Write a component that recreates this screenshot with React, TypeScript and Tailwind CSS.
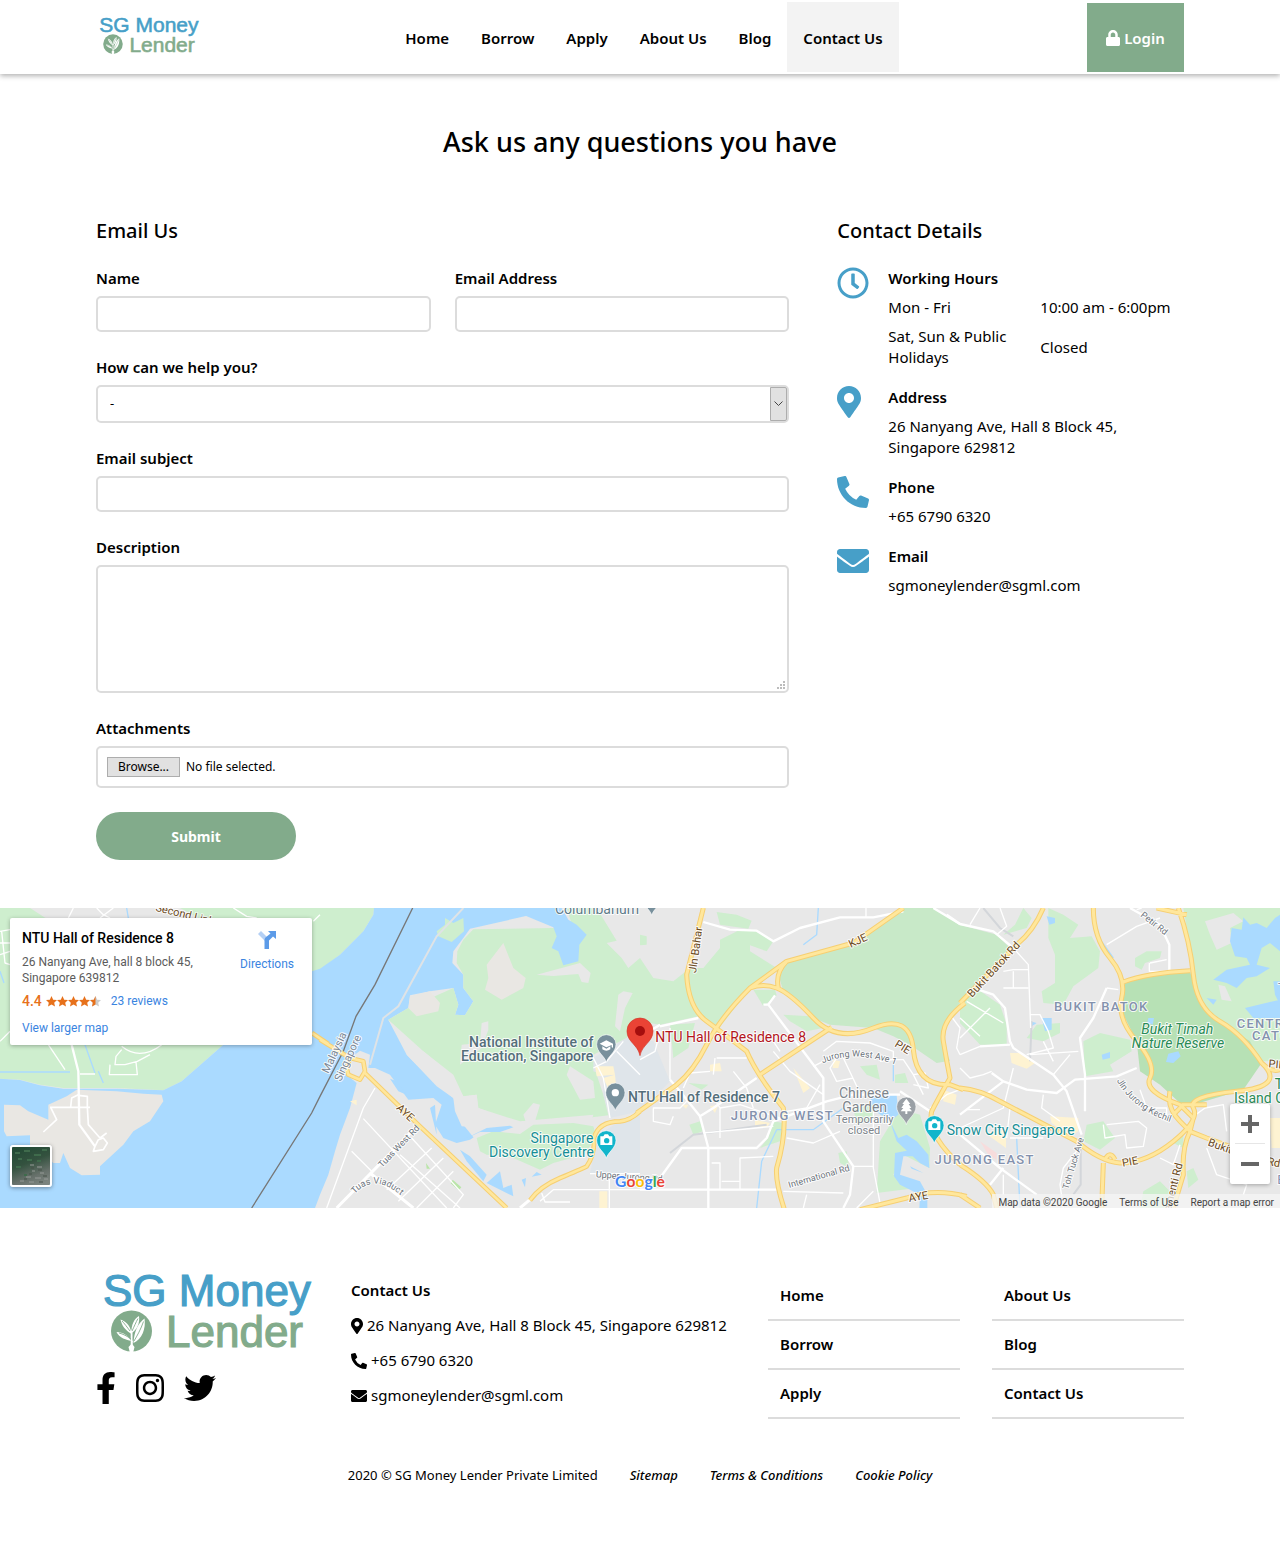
import React from "react";
import {
  FaEnvelope,
  FaFacebookF,
  FaInstagram,
  FaLock,
  FaMapMarkerAlt,
  FaPhoneAlt,
  FaRegClock,
  FaTwitter,
} from "react-icons/fa";

function Logo({ className }: { className: string }) {
  return (
    <svg viewBox="0 0 220 84" className={className} role="img" aria-label="SG Money Lender">
      <g fontFamily="Liberation Sans, Arial, sans-serif" fontSize="44" strokeWidth="1.200">
        <text x="7" y="36" fill="#479fc8" stroke="#479fc8">SG Money</text>
        <text x="70" y="77" fill="#82ab8b" stroke="#82ab8b">Lender</text>
      </g>
      <circle cx="35.500" cy="61" r="20.500" fill="#82ab8b" />
      <g fill="#fff">
        <path d="M35.500 70 37 71Q35.500 74 38.500 77L37 83H34L32.500 77Q36 74 35.500 70z" />
        <path d="M35 71C31 70 23 68 20.500 62 27 62 33 66 35 71z" />
        <path d="M35.500 64C29 60 26 56 24.500 49.500 31 52 35 57 35.500 64z" />
        <path d="M35.500 63C35 55 38 49 43 46 44 53 41 60 35.500 63z" />
        <path d="M37.500 73C38 62 42 53 48.500 48.500 50 59 46 69 37.500 73z" />
        <path d="M34.700 60h1.800v14h-1.800z" />
      </g>
      <path d="M38 71C41 66 45 59 47.500 51.500M36 61C38 57 40 52 42 48.500M35 69C31 66 27 64 23 63M34 61C31 57 28 53 26 51" stroke="#82ab8b" strokeWidth="0.900" fill="none" />
    </svg>
  );
}

const navItems = ["Home", "Borrow", "Apply", "About Us", "Blog"];

function Header() {
  return (
    <header className="relative bg-white shadow-[0_2px_5px_rgba(0,0,0,0.3)]">
      <div className="mx-auto flex h-[74px] w-[85%] items-center justify-between">
        <a href="#home" className="mb-1">
          <Logo className="block w-[105px]" />
        </a>
        <nav className="flex text-[15px] font-semibold">
          {navItems.map((n) => (
            <a key={n} href="#nav" className="flex h-[70px] items-center px-4 pt-0.5">{n}</a>
          ))}
          <a href="#contact" aria-current="page" className="flex h-[70px] items-center bg-[#f3f3f3] px-4 pt-0.5">Contact Us</a>
        </nav>
        <a href="#login" className="flex h-[69px] w-[97px] items-center justify-center gap-1 bg-[#82ab8b] pt-0.5 text-[15px] font-semibold text-white">
          <FaLock className="h-4 w-[14px]" />
          Login
        </a>
      </div>
    </header>
  );
}

const field = "block w-full rounded-[5px] border-2 border-[#dcdcdc] bg-white px-3 outline-none";
const label = "mb-1.5 block text-[15px] leading-[23px] font-semibold";
const heading = "mb-[22px] text-[20px] leading-[29px] font-medium";

function EmailForm() {
  return (
    <form className="flex flex-col gap-6" onSubmit={(e) => e.preventDefault()}>
      <div className="grid grid-cols-2 gap-6">
        <div>
          <label htmlFor="name" className={label}>Name</label>
          <input id="name" className={`${field} h-9`} />
        </div>
        <div>
          <label htmlFor="email" className={label}>Email Address</label>
          <input id="email" type="email" className={`${field} h-9`} />
        </div>
      </div>
      <div>
        <label htmlFor="topic" className={label}>How can we help you?</label>
        <div className="relative">
          <select id="topic" className={`${field} h-[38px] appearance-none text-[13px]`}>
            <option>-</option>
          </select>
          <span className="pointer-events-none absolute inset-y-0.5 right-0.5 flex w-[17px] items-center justify-center rounded-r-[2px] border border-[#adadad] bg-[#e1e1e1]">
            <svg viewBox="0 0 9 6" className="w-[9px]" fill="none" stroke="#444"><path d="M0.500 0.500 4.500 4.500 8.500 0.500" /></svg>
          </span>
        </div>
      </div>
      <div>
        <label htmlFor="subject" className={label}>Email subject</label>
        <input id="subject" className={`${field} h-9`} />
      </div>
      <div>
        <label htmlFor="description" className={label}>Description</label>
        <div className="relative">
          <textarea id="description" className={`${field} h-32 resize-none py-2`} />
          <svg viewBox="0 0 8 8" className="pointer-events-none absolute right-1 bottom-1 w-2" fill="#bcbcbc">
            <path d="M6 0h2v2h-2zM3 3h2v2h-2zM6 3h2v2h-2zM0 6h2v2h-2zM3 6h2v2h-2zM6 6h2v2h-2z" />
          </svg>
        </div>
      </div>
      <div>
        <label htmlFor="files" className={label}>Attachments</label>
        <div className="relative flex h-[42px] items-center gap-1.5 rounded-[5px] border-2 border-[#dcdcdc] px-[9px] text-[12px]">
          <span className="flex h-5 w-[73px] items-center justify-center border border-[#adadad] bg-[#e1e1e1]">Browse...</span>
          <span>No file selected.</span>
          <input id="files" type="file" className="absolute inset-0 opacity-0" />
        </div>
      </div>
      <button type="submit" className="h-12 w-[200px] rounded-full bg-[#82ab8b] text-[14px] font-bold text-white">Submit</button>
    </form>
  );
}

function Detail({ icon, title, children }: { icon: React.ReactNode; title: string; children: React.ReactNode }) {
  return (
    <div className="flex">
      <div className="w-[51px] shrink-0 text-[#479fc8]">{icon}</div>
      <div className="min-w-0 flex-1 pt-px">
        <h3 className="mb-2 font-semibold">{title}</h3>
        {children}
      </div>
    </div>
  );
}

function ContactDetails() {
  return (
    <div className="flex flex-col gap-[18px] text-[15px] leading-[21px]">
      <Detail icon={<FaRegClock className="size-8" />} title="Working Hours">
        <table className="w-full text-left">
          <tbody>
            <tr>
              <td className="w-[152px] pb-2">Mon - Fri</td>
              <td className="pb-2 whitespace-nowrap">10:00 am - 6:00pm</td>
            </tr>
            <tr>
              <td className="pr-5">Sat, Sun &amp; Public Holidays</td>
              <td>Closed</td>
            </tr>
          </tbody>
        </table>
      </Detail>
      <Detail icon={<FaMapMarkerAlt className="h-8 w-6" />} title="Address">
        <p>26 Nanyang Ave, Hall 8 Block 45,<br />Singapore 629812</p>
      </Detail>
      <Detail icon={<FaPhoneAlt className="size-8" />} title="Phone"><p>+65 6790 6320</p></Detail>
      <Detail icon={<FaEnvelope className="size-8" />} title="Email"><p>sgmoneylender@sgml.com</p></Detail>
    </div>
  );
}

/* Map geometry: four 960-unit tiles side by side, three units to a pixel. */
const tiles = ["translate(0 0)", "translate(960 0)", "translate(1920 0)", "translate(2880 0)"];

type Shape = { t: number; c: string; d: string };
const G = "#ceeece";
const W = "#aadaff";
const L = "#e8e8e8";
const B = "#e9e7e3";
const Y = "#fef3d2";

const areas: Shape[] = [
  { t: 0, c: G, d: "M0 0H1122L1120 20 1090 70 1020 140 936 205 670 410 545 520 490 547 350 540 190 540 120 530 60 515 0 512z" },
  { t: 0, c: L, d: "M90 0 140 32 600 32 540 0z" },
  { t: 1, c: W, d: "M162 0 160 20 130 70 60 140 0 182 -24 190 -290 410 -415 520 -470 547 -610 542 -770 542 -840 532 -900 516 -960 512V900H-15L0 860 25 800 45 730 60 680 90 600 110 525 80 500 92 450 120 428 150 440 145 480 165 480 210 500 265 575 340 570 365 590 345 650 370 690 410 705 450 695 480 675 570 655 480 660 425 655 405 610 400 570 350 535 260 440 265 425 205 335 265 300 270 262 330 250 400 240 415 290 405 320 435 322 460 280 430 240 430 200 397 165 400 130 430 90 450 62 725 0z" },
  { t: 0, c: B, d: "M12 590 60 592 85 610 145 635 145 590 200 565 230 545 350 550 430 557 485 560 490 580 450 640 400 670 370 710 300 775 300 800 245 802 210 780 190 735 180 765 160 765 90 710 90 682 20 685 12 670z" },
  { t: 1, c: G, d: "M740 0H830L890 98 860 105 905 150 925 180 960 150 1000 210 1060 220 1110 180 1150 180 1200 120 1200 95 1260 65 1300 65 1360 100 1340 130 1290 112 1290 130 1370 180 1290 240 1190 370 1135 325 1020 350 960 340 920 390 820 440 830 500 850 560 865 622 800 630 760 640 640 650 600 650 475 600 470 560 430 565 380 490 310 430 265 425 205 335 265 300 400 240 415 290 405 320 435 322 460 280 430 240 430 200 410 165 412 130 430 95 460 64 700 60 775 110z" },
  { t: 1, c: W, d: "M560 0H725L745 35 770 50 800 80 778 110 775 160 730 172 715 130 695 120 710 85 700 58z" },
  { t: 1, c: G, d: "M350 70 375 50 375 30 400 45 430 30 432 70 395 102 355 85z" },
  { t: 1, c: B, d: "M550 105 580 180 617 210 610 240 545 275 495 245 505 210 500 170zM270 265 330 250 360 285 355 310 290 325 265 300z" },
  { t: 1, c: L, d: "M650 200 780 165 812 195 805 225 785 222 775 198 700 204zM485 345 505 340 505 365 485 420 420 470 425 410 480 405zM610 620 640 585 660 590 645 640 620 650zM740 500 750 475 820 520 825 570 780 575zM895 260 910 250 938 255 915 300 900 370 885 355zM205 335 310 430 400 500 430 565 470 560 475 600 600 640 820 620 800 690 470 700 430 650 400 570 350 530 260 440z" },
  { t: 1, c: G, d: "M470 690 520 670 600 678 640 650 760 645 820 655 830 690 790 740 700 765 660 785 580 750 500 740 480 730z" },
  { t: 1, c: W, d: "M210 512 230 520 260 560 235 550zM225 500 240 510 232 520zM420 725 450 745 500 800 490 820 440 760zM540 790 550 840 575 830 580 865 500 825zM605 815 618 810 615 838zM650 792 665 800 635 806zM330 600 345 590 350 680zM410 705 500 660 570 653 580 658 540 672 480 672z" },
  { t: 1, c: "#dfe5ea", d: "M820 450 920 390 1000 400 1050 520 960 610 870 630 850 560 850 500 820 490zM835 680 900 640 960 610V795H810z" },
  { t: 1, c: Y, d: "M825 475 880 475 885 500 830 505zM850 510 885 500 890 550 870 555zM838 850H862V900H838zM90 580 110 575 110 592z" },
  { t: 1, c: "#b9e5a8", d: "M398 815 424 838 416 847 392 826zM318 765 330 782 320 782z" },
  { t: 2, c: L, d: "M0 0H60L30 60H0z" },
  { t: 2, c: G, d: "M0 80 20 85 20 110 0 112zM230 12 290 20 335 38 325 62 240 50zM90 350 165 345 145 420 100 450zM340 245 405 245 410 262 370 295zM430 320 510 325 560 358 500 370 450 340zM145 525 205 530 185 545zM148 650 180 640 188 670 160 680zM400 640 430 645 420 700 360 720 385 690zM660 475 710 470 720 515 680 500zM765 500 795 495 805 525 765 525zM720 700 750 650 770 600 840 620 870 720 868 780 790 740 760 800 830 840 710 855zM595 735 620 730 628 780 600 765zM640 600 700 590 700 635 650 650z" },
  { t: 2, c: W, d: "M690 565 770 560 775 620 750 640 700 605zM750 640 775 690 800 680 830 700 865 740 868 780 840 765 770 700zM765 735 815 725 830 745 790 745 780 800 840 820 862 860V900H838L840 860 780 830 762 805zM810 775 850 795 815 782z" },
  { t: 2, c: "#c8e9c8", d: "M440 165 640 110 780 0H880L960 50 1070 80 1120 130 960 285 910 350 905 400 930 458 890 465 810 410 760 385 700 360 570 350 520 330 430 250 415 200z" },
  { t: 2, c: Y, d: "M210 470 240 465 245 490 210 490zM460 480 510 540 490 555zM580 455 600 460 595 480 578 480zM210 595 235 590 225 615zM345 635 390 645 380 658 345 655zM910 545 950 560 945 590 910 580zM125 590 145 590 138 602z" },
  { t: 3, c: G, d: "M190 0 165 50 130 80 200 60 215 30zM265 0 310 20 355 50 330 90 395 85 420 130 415 180 340 235 310 290 250 285 245 250 285 225 285 140 265 90zM230 350 300 345 300 375 250 400 200 390zM0 280 55 245 120 290 140 350 140 410 60 410 0 345zM370 400 420 375 510 395 515 430 450 470 460 490 375 505zM380 650 430 640 465 690 420 725 370 700zM550 850 600 820 640 860 620 900H540zM680 790 700 780 715 815 685 840zM630 700 670 680 670 720zM525 150 560 130 605 130 600 150 555 165 545 185 525 175z" },
  { t: 3, c: "#cfeecd", d: "M670 0H960V460H905L860 400 760 330 715 260z" },
  { t: 3, c: L, d: "M735 40 820 15 850 40 810 60 815 105 770 125 750 80zM775 230 795 235 815 280 785 275z" },
  { t: 3, c: W, d: "M850 28 870 50 890 45 920 60 945 30 960 20V130L930 105 905 120 890 170 930 180 890 205 860 210 830 240 800 225 760 215 800 185 870 170 860 150 825 145 810 100 815 60 845 65zM940 220H960V290L945 260zM855 300 960 275V330H880zM740 270 770 275 760 290zM260 25 285 30 285 45 268 50zM245 330 275 330 275 365 255 370zM425 440 450 432 450 450 428 455zM210 340 230 345 215 355z" },
  { t: 3, c: "#b7e1b5", d: "M495 220 570 200 690 190 712 262 760 330 870 400 905 465 850 545 700 590 660 585 600 530 540 490 530 400 480 300z" },
  { t: 3, c: W, d: "M625 437 655 430 662 445 640 465 618 462zM565 330 582 330 578 350 562 345z" },
  { t: 3, c: Y, d: "M150 435 185 435 225 465 200 482 155 465zM270 625 355 630 355 670 330 685 275 645zM75 675 138 665 138 720zM930 630H960V720H935z" },
  { t: 3, c: "#f7dcdc", d: "M60 700 110 735 110 755 85 740z" },
];

const minor: Shape[] = [
  { t: 0, c: "7", d: "M215 410 235 490 238 650 285 715" },
  { t: 0, c: "5", d: "M235 560 215 570 212 597 M150 598H270 M152 598 170 635 130 672 M262 597V565L235 562 M262 597 265 650 300 690 M285 715 280 730 310 725 322 705 310 690 295 695 285 715 M300 690 320 675" },
  { t: 0, c: "4", d: "M0 70 30 65 M0 105H30 M0 140 30 130 M5 70 15 165 30 170 M0 400 30 370 M205 30 220 0 M940 40 960 20 M145 410 195 485 M365 415Q420 460 485 410 M365 425 348 445 345 470 375 470 412 460 450 440 M330 470 328 500H412L408 462 M240 498H285 M290 0 310 20 330 30 M300 30 340 0 M700 0 740 25 770 30" },
  { t: 1, c: "9", d: "M50 900 290 655 M150 795 280 900 M600 900 630 875" },
  { t: 1, c: "4", d: "M20 900 130 600 165 540 M130 632 380 900 M95 730 155 790 M275 690 430 860 400 900 M240 740 420 900 M335 720 200 845 M370 750 235 880 M400 790 290 900 M300 650 340 700 M660 880 700 845 960 845 M665 855 675 882H750 M810 797H960 M868 797V900 M815 440 850 510 870 630 M820 480 860 460 910 400 M890 430 960 500" },
  { t: 2, c: "7", d: "M190 42 270 65 350 68 400 100 480 60 600 28 700 28 790 10 M880 0 960 48 M370 290 385 290 550 510 550 640 640 775 630 860 610 900 M405 262 385 290 M60 810 125 720H205V900 M0 845H410 M180 625 205 720 M205 720H350L380 690 400 640 560 580 640 560H780 M180 625 220 600 350 510 M180 625 120 550 90 515 M780 550 870 610 M60 355 175 330 M20 375 60 350" },
  { t: 2, c: "4", d: "M678 0V28 M90 360V515 M0 455 45 430 60 370 M215 560 240 600 300 590 420 630 M150 570 120 600 40 600 40 640 90 650 100 625 M210 490 150 495 130 540 M230 450H320 M225 450 220 500 M280 490 320 540 340 600 M240 600V690 M190 675 400 655 M215 765H240V845 M300 845V750L400 745 M245 820H300 M440 690 520 705 600 670 M430 850 610 855 M400 430 450 490 550 560 M380 370 420 430 M440 610 500 600 540 530 M550 430 590 400 690 405 760 430V455L720 460 M590 450 570 480 590 520 640 510 M610 450 660 555 M520 475 590 440 M740 455 790 455 820 500 850 560 M820 500 855 495 865 540 820 530 M700 600V780L720 885 M640 775H700 M500 860 490 900 M650 900 700 850 M930 320 960 360 950 420 960 440 M870 600 920 560 960 545" },
  { t: 3, c: "7", d: "M-40 20 0 48 100 70 160 120 M55 245 100 260 135 300 150 400 160 420 280 500 320 550 365 680 M0 620 130 520 M510 0 600 50 628 110V190 M530 480 470 505 345 515 290 555 200 545 130 520 95 495 M150 410 60 415 M440 240 400 330 360 390 375 500V610 M0 680 120 780 230 860 M130 780 90 830" },
  { t: 3, c: "4", d: "M110 80 140 55 120 0 M30 50 60 0 M160 120 205 170 212 360 M130 190 160 185H205 M160 190V240H205 M130 240H160 M20 280 130 345 M0 390 90 300 M0 330 60 385 M0 440 60 415 M0 480 30 510 70 500 95 490 M212 320 240 320 265 370 280 420 200 440 M210 440 355 430 M440 110 530 55 600 30 M440 240 475 245 M570 165 620 155 M568 165V190H625 M0 660 130 600 160 480 M60 605H20 M150 600 140 690 M150 690 250 690 M365 710 310 780 300 830 310 900 M440 650 535 640 560 660 550 715 500 720 495 680 435 690 430 650 M600 750 640 770 660 710 M540 545 560 600 620 600V625 M700 625 735 600 790 590 800 670 M740 720 770 800 860 830 850 860 M530 5 545 0 M130 800V860 M250 400 280 460 M280 500 330 440 M250 560 245 600 300 640" },
];

const major: Shape[] = [
  { t: 0, c: "12", d: "M936 375 985 408" },
  { t: 1, c: "12", d: "M0 395 90 450 130 460 135 490 120 515 85 500 80 480 M90 450 80 480 85 500 M130 490 300 655 560 900 M630 877Q660 835 720 810 T800 775 Q825 740 822 690 Q835 640 900 640 Q930 638 960 610" },
  { t: 2, c: "13", d: "M-10 615 110 530 Q160 490 200 410 T330 240 L440 160 640 105 790 0 M330 240Q370 225 410 240 T520 330 T700 360 T820 425 T930 530 L970 545 M190 0 140 200 Q145 300 200 340 T320 430 Q350 500 430 600 Q440 680 410 780 Q405 820 435 910 M575 358 360 500 M440 160Q405 195 415 240 M660 905 800 870 Q880 840 980 865 M975 285Q900 340 910 400 T930 510 Q890 580 875 610 Q860 680 960 770" },
  { t: 3, c: "13", d: "M0 285 170 110 Q220 70 250 0 M400 0Q400 90 450 150 T485 270 T530 400 T570 510 T660 590 L700 630 690 670 740 690 960 770 M490 222Q560 195 690 188 M590 0 680 20 M655 0 Q690 100 700 200 T780 340 T905 465 Q940 500 970 480 M0 540Q60 545 120 580 L350 700 Q420 760 480 765 Q560 765 640 700 T700 600 T830 550 T905 465 M630 550Q620 600 660 640 T690 670 Q665 720 670 800 L640 900 M430 765 425 900 M0 770Q80 820 100 860 L110 900 M0 860 60 900 M435 755Q450 725 465 755 M670 590 640 620 M665 590 740 590" },
];

function Roads({ color, extra }: { color: string; extra: number }) {
  return (
    <g fill="none" stroke={color} strokeLinejoin="round">
      {major.map((r, i) => (
        <path key={i} transform={tiles[r.t]} d={r.d} strokeWidth={Number(r.c) + extra} />
      ))}
    </g>
  );
}

type MapText = { x: number; y: number; s: string; f: string; size?: number; rot?: number; anchor?: "start" | "middle" | "end"; cls?: string };
const road = "#6b4a1c";
const street = "#6d747c";
const district = "font-medium tracking-widest";
const labels: MapText[] = [
  { x: 465, y: 8, s: "Second Link", f: road, size: 33, rot: 14 },
  { x: 1665, y: 18, s: "Columbarium", f: "#5f7c8a" },
  { x: 1780, y: 417, s: "National Institute of", f: "#546e7a", anchor: "end", cls: "font-medium" },
  { x: 1780, y: 459, s: "Education, Singapore", f: "#546e7a", anchor: "end", cls: "font-medium" },
  { x: 1780, y: 705, s: "Singapore", f: "#168e96", anchor: "end" },
  { x: 1782, y: 747, s: "Discovery Centre", f: "#168e96", anchor: "end" },
  { x: 1966, y: 402, s: "NTU Hall of Residence 8", f: "#b3151c" },
  { x: 1884, y: 582, s: "NTU Hall of Residence 7", f: "#546e7a", cls: "font-medium" },
  { x: 2347, y: 637, s: "JURONG WEST", f: "#8391ad", size: 39, anchor: "middle", cls: district },
  { x: 2954, y: 768, s: "JURONG EAST", f: "#8391ad", size: 39, anchor: "middle", cls: district },
  { x: 3304, y: 310, s: "BUKIT BATOK", f: "#8391ad", size: 39, anchor: "middle", cls: district },
  { x: 3710, y: 361, s: "CENTRAL WATER", f: "#8391ad", size: 39, cls: district },
  { x: 3756, y: 397, s: "CATCHMENT", f: "#8391ad", size: 39, cls: district },
  { x: 3834, y: 252, s: "T", f: "#8391ad", size: 39 },
  { x: 3832, y: 828, s: "B", f: "#8391ad", size: 39 },
  { x: 2592, y: 570, s: "Chinese", f: "#7d858c", anchor: "middle" },
  { x: 2594, y: 612, s: "Garden", f: "#7d858c", anchor: "middle" },
  { x: 2594, y: 645, s: "Temporarily", f: "#7d858c", size: 33, anchor: "middle" },
  { x: 2592, y: 677, s: "closed", f: "#7d858c", size: 33, anchor: "middle" },
  { x: 2840, y: 682, s: "Snow City Singapore", f: "#168e96" },
  { x: 3532, y: 378, s: "Bukit Timah", f: "#2a8b57", anchor: "middle", cls: "italic" },
  { x: 3534, y: 420, s: "Nature Reserve", f: "#2a8b57", anchor: "middle", cls: "italic" },
  { x: 3824, y: 543, s: "The", f: "#2a8b57" },
  { x: 3702, y: 585, s: "Island Club", f: "#2a8b57" },
  { x: 985, y: 498, s: "Malaysia", f: "#7c8794", size: 33, rot: -65 },
  { x: 1022, y: 522, s: "Singapore", f: "#7c8794", size: 33, rot: -65 },
  { x: 1187, y: 602, s: "AYE", f: road, size: 33, rot: 43 },
  { x: 1146, y: 780, s: "Tuas West Rd", f: street, size: 27, rot: -46 },
  { x: 2088, y: 196, s: "Jln Bahar", f: road, size: 33, rot: -82 },
  { x: 2552, y: 120, s: "KJE", f: road, size: 33, rot: -25 },
  { x: 2682, y: 414, s: "PIE", f: road, size: 33, rot: 32 },
  { x: 2368, y: 840, s: "International Rd", f: street, size: 27, rot: -16 },
  { x: 2728, y: 882, s: "AYE", f: road, size: 33, rot: -10 },
  { x: 1787, y: 808, s: "Upper Jurong Rd", f: street, size: 27, rot: 4 },
  { x: 2916, y: 270, s: "Bukit Batok Rd", f: road, size: 33, rot: -47 },
  { x: 3420, y: 24, s: "Petir Rd", f: street, size: 27, rot: 38 },
  { x: 3368, y: 776, s: "PIE", f: road, size: 33, rot: -10 },
  { x: 3205, y: 845, s: "Toh Tuck Ave", f: street, size: 27, rot: -73 },
  { x: 3622, y: 712, s: "Bukit", f: road, size: 33, rot: 20 },
  { x: 3800, y: 770, s: "Rd", f: road, size: 33, rot: 12 },
  { x: 3505, y: 940, s: "Clementi Rd", f: road, size: 33, rot: -76 },
  { x: 3805, y: 478, s: "PIE", f: road, size: 33, rot: 5 },
];

const curved = [
  { id: "jurong-west-ave", d: "M2468 466Q2560 425 2680 468", s: "Jurong West Ave 1" },
  { id: "jln-jurong-kechil", d: "M3350 518Q3400 605 3510 642", s: "Jln Jurong Kechil" },
  { id: "tuas-viaduct", d: "M1064 858Q1120 795 1200 860", s: "Tuas Viaduct" },
];

function Pin({ x, y, color, glyph }: { x: number; y: number; color: string; glyph: React.ReactNode }) {
  return (
    <g transform={`translate(${x} ${y})`}>
      <path d="M0 0C-4-18-29-30-29-54A29 29 0 0 1 29-54C29-30 4-18 0 0z" fill={color} stroke="#fff" strokeOpacity="0.600" strokeWidth="3" />
      {glyph}
    </g>
  );
}

const camera = (
  <g>
    <path d="M-18-66h9l4-6h10l4 6h9v26h-36z" fill="#fff" />
    <circle cx="1" cy="-53" r="8" fill="#12b5cb" />
  </g>
);

function MapCanvas() {
  return (
    <svg viewBox="0 0 3840 900" preserveAspectRatio="xMidYMid slice" className="block h-full w-full font-['Roboto',sans-serif]" role="img" aria-label="Map of western Singapore">
      <rect width="3840" height="900" fill={L} />
      {areas.map((a, i) => (
        <path key={i} transform={tiles[a.t]} d={a.d} fill={a.c} />
      ))}
      <g fill="none" stroke={W} strokeWidth="4">
        <path d="M380 0 385 30M0 190 12 225M255 410 285 495M0 492H210M295 490 310 525" />
        <path d="M2455 0 2450 80 2410 110M2680 460V520M2330 665 2440 665 2530 600M2270 900 2285 760 2330 665M3050 690 3060 900M3275 0 3290 80 3340 150" />
      </g>
      <path d="M1390 0 1310 85 1195 295 1150 330 1110 470" fill="none" stroke="#dfe3e6" strokeWidth="6" />
      <path d="M2010 735 2080 680 2160 670 2300 650M2950 0 3000 60 3040 85M3090 460 3095 340M3242 700V830L3220 860" fill="none" stroke="#d3d6da" strokeWidth="6" />
      <path d="M1238 0 1125 230 1068 325 1030 430 960 565 935 615 755 900" fill="none" stroke="#777" strokeWidth="4" />
      <g fill="none" stroke="#fff" strokeLinejoin="round">
        {minor.map((r, i) => (
          <path key={i} transform={tiles[r.t]} d={r.d} strokeWidth={Number(r.c)} />
        ))}
      </g>
      <Roads color="#f6cf72" extra={2} />
      <Roads color="#ffe79c" extra={-4} />
      <Pin x={1819} y={463} color="#78909c" glyph={<path d="M-20-56 0-66 20-56V-44L16-45V-52L0-45zM-12-48 0-41 12-48V-39Q0-31-12-39z" fill="#fff" />} />
      <Pin x={1846} y={608} color="#78909c" glyph={<circle cy="-54" r="11" fill="#fff" />} />
      <Pin x={1955} y={22} color="#78909c" glyph={null} />
      <Pin x={1819} y={751} color="#12b5cb" glyph={camera} />
      <Pin x={2803} y={706} color="#12b5cb" glyph={camera} />
      <Pin x={2719} y={650} color="#9aa0a6" glyph={<path d="M0-78 12-62H7L15-50H9L17-40H3V-32H-3V-40H-17L-9-50H-15L-7-62H-12z" fill="#fff" />} />
      <path d="M1920 443C1914 410 1881 402 1881 369A39 39 0 0 1 1959 369C1959 402 1926 410 1920 443z" fill="#ea4335" stroke="#d33828" strokeWidth="2" />
      <circle cx="1920" cy="369" r="15" fill="#a50e0e" />
      <defs>
        {curved.map((c) => (
          <path key={c.id} id={c.id} d={c.d} />
        ))}
      </defs>
      <g stroke="#fff" strokeWidth="6" strokeOpacity="0.850" strokeLinejoin="round" style={{ paintOrder: "stroke" }}>
        {labels.map((l, i) => (
          <text key={i} x={l.x} y={l.y} fill={l.f} fontSize={l.size ?? 42} textAnchor={l.anchor ?? "start"} className={l.cls} transform={l.rot ? `rotate(${l.rot} ${l.x} ${l.y})` : undefined}>
            {l.s}
          </text>
        ))}
        {curved.map((c) => (
          <text key={c.id} fill={street} fontSize="27">
            <textPath href={`#${c.id}`}>{c.s}</textPath>
          </text>
        ))}
        <text x="1845" y="838" fontSize="47" className="font-['Lato',sans-serif] font-bold">
          <tspan fill="#4285f4">G</tspan><tspan fill="#ea4335">o</tspan><tspan fill="#fbbc05">o</tspan><tspan fill="#4285f4">g</tspan><tspan fill="#34a853">l</tspan><tspan fill="#ea4335">e</tspan>
        </text>
      </g>
    </svg>
  );
}

function Stars() {
  const star = "M5.500 0 7.200 3.700 11 4.100 8.200 6.700 9 10.500 5.500 8.600 2 10.500 2.800 6.700 0 4.100 3.800 3.700z";
  return (
    <svg viewBox="0 0 55 11" className="w-[55px]" role="img" aria-label="4.4 stars">
      {[0, 11, 22, 33].map((x) => (
        <path key={x} transform={`translate(${x} 0)`} d={star} fill="#e7711b" />
      ))}
      <path transform="translate(44 0)" d={star} fill="#ccc" />
      <path transform="translate(44 0)" d="M5.500 0V8.600L2 10.500 2.800 6.700 0 4.100 3.800 3.700z" fill="#e7711b" />
    </svg>
  );
}

function MapSection() {
  return (
    <section className="relative h-[300px] overflow-hidden font-['Roboto',sans-serif]">
      <MapCanvas />
      <div className="absolute top-2.5 left-2.5 flex h-[127px] w-[302px] justify-between rounded-[2px] bg-white px-3 pt-[11px] text-[12px] leading-4 shadow-[0_1px_4px_rgba(0,0,0,0.3)]">
        <div>
          <h2 className="text-[14px] leading-[18px] font-medium">NTU Hall of Residence 8</h2>
          <p className="mt-[7px] text-[#5b5b5b]">26 Nanyang Ave, hall 8 block 45,<br />Singapore 639812</p>
          <div className="mt-[7px] flex items-center">
            <span className="mr-1 text-[14px] font-medium text-[#e7711b]">4.4</span>
            <Stars />
            <a href="#reviews" className="ml-2.5 text-[#3a84df]">23 reviews</a>
          </div>
          <a href="#map" className="mt-[11px] block text-[#3a84df]">View larger map</a>
        </div>
        <a href="#directions" className="mt-0.5 mr-1.5 flex flex-col items-center gap-[7px] self-start text-[#3a84df]">
          <svg viewBox="0 0 18 18" className="w-[18px]">
            <path d="M0 3 3 0 9 6V12z" fill="#b4d0f5" />
            <path d="M10 0h8v8L15 5.500 11 9.500V18H6.500V9Q6.500 7.500 7.500 6.500L12.500 2.500z" fill="#5c9be8" />
          </svg>
          Directions
        </a>
      </div>
      <button type="button" aria-label="Show satellite imagery" className="absolute bottom-[21px] left-2.5 size-[42px] overflow-hidden rounded-[3px] border-2 border-white shadow-[0_1px_4px_rgba(0,0,0,0.4)]">
        <svg viewBox="0 0 38 38" className="block size-full">
          <defs>
            <linearGradient id="terrain" x1="0.300" y1="0" x2="0.700" y2="1">
              <stop offset="0" stopColor="#234a35" />
              <stop offset="0.400" stopColor="#34523f" />
              <stop offset="0.750" stopColor="#66706a" />
              <stop offset="1" stopColor="#7b837e" />
            </linearGradient>
          </defs>
          <rect width="38" height="38" fill="url(#terrain)" />
          <path d="M3 6h5M12 4h6M22 8h7M30 3h5M6 12h4M15 13h5M25 14h4M4 20h5M12 28h3" stroke="#3f6b4c" strokeWidth="2" />
          <path d="M18 18h4M25 20h5M20 24h3M28 26h4M14 30h5M23 31h6M32 32h4M8 34h4M17 35h5" stroke="#979b98" />
          <path d="M19 21h3M26 23h4M17 27h3M31 29h4M12 32h3M27 35h4" stroke="#465048" />
        </svg>
      </button>
      <div className="absolute right-2.5 bottom-6 flex w-10 flex-col rounded-[2px] bg-white px-[5px] shadow-[0_1px_4px_rgba(0,0,0,0.3)]">
        <button type="button" aria-label="Zoom in" className="flex h-10 items-center justify-center border-b border-[#e6e6e6]">
          <svg viewBox="0 0 18 18" className="w-[18px]" fill="#666"><path d="M7 0h4v7h7v4h-7v7H7v-7H0V7h7z" /></svg>
        </button>
        <button type="button" aria-label="Zoom out" className="flex h-10 items-center justify-center">
          <svg viewBox="0 0 18 18" className="w-[18px]" fill="#666"><path d="M0 7h18v4H0z" /></svg>
        </button>
      </div>
      <div className="absolute right-0 bottom-0 flex h-3.5 items-center gap-3 bg-[#f5f5f5]/75 px-1.5 pt-1 text-[10px] leading-[10px] text-[#444]">
        <span>Map data ©2020 Google</span>
        <a href="#terms">Terms of Use</a>
        <a href="#report">Report a map error</a>
      </div>
    </section>
  );
}

function LinkColumn({ items }: { items: string[] }) {
  return (
    <ul className="mt-0.5 font-semibold">
      {items.map((n) => (
        <li key={n} className="border-b-2 border-[#dcdcdc]">
          <a href="#footer" className="flex h-[47px] items-center px-3">{n}</a>
        </li>
      ))}
    </ul>
  );
}

function Footer() {
  return (
    <footer className="mx-auto w-[85%] pt-[62px] pb-[62px] text-[15px] leading-[21px]">
      <div className="grid grid-cols-[223px_1fr_192px_192px] gap-8">
        <div>
          <Logo className="block w-[220px]" />
          <div className="mt-[18px] flex gap-5">
            <a href="#facebook" aria-label="Facebook"><FaFacebookF className="h-8 w-5" /></a>
            <a href="#instagram" aria-label="Instagram"><FaInstagram className="h-8 w-7" /></a>
            <a href="#twitter" aria-label="Twitter"><FaTwitter className="size-8" /></a>
          </div>
        </div>
        <div className="flex flex-col gap-3.5 pt-2.5">
          <h3 className="font-semibold">Contact Us</h3>
          <p className="flex items-center gap-1 whitespace-nowrap"><FaMapMarkerAlt className="h-4 w-3" />26 Nanyang Ave, Hall 8 Block 45, Singapore 629812</p>
          <p className="flex items-center gap-1"><FaPhoneAlt className="size-4" />+65 6790 6320</p>
          <p className="flex items-center gap-1"><FaEnvelope className="size-4" />sgmoneylender@sgml.com</p>
        </div>
        <LinkColumn items={["Home", "Borrow", "Apply"]} />
        <LinkColumn items={["About Us", "Blog", "Contact Us"]} />
      </div>
      <div className="mt-[46px] flex justify-center gap-8 text-[13px]">
        <span>2020 © SG Money Lender Private Limited</span>
        <a href="#sitemap" className="font-medium italic">Sitemap</a>
        <a href="#terms" className="font-medium italic">Terms &amp; Conditions</a>
        <a href="#cookies" className="font-medium italic">Cookie Policy</a>
      </div>
    </footer>
  );
}

export default function App() {
  return (
    <div className="bg-white font-['Noto_Sans','Open_Sans',sans-serif] text-black">
      <Header />
      <main>
        <div className="mx-auto w-[85%] pt-12 pb-12">
          <h1 className="mb-[54px] text-center text-[27px] leading-10 font-medium">Ask us any questions you have</h1>
          <div className="grid grid-cols-[2fr_1fr] gap-12">
            <section>
              <h2 className={heading}>Email Us</h2>
              <EmailForm />
            </section>
            <section>
              <h2 className={heading}>Contact Details</h2>
              <ContactDetails />
            </section>
          </div>
        </div>
        <MapSection />
      </main>
      <Footer />
    </div>
  );
}
